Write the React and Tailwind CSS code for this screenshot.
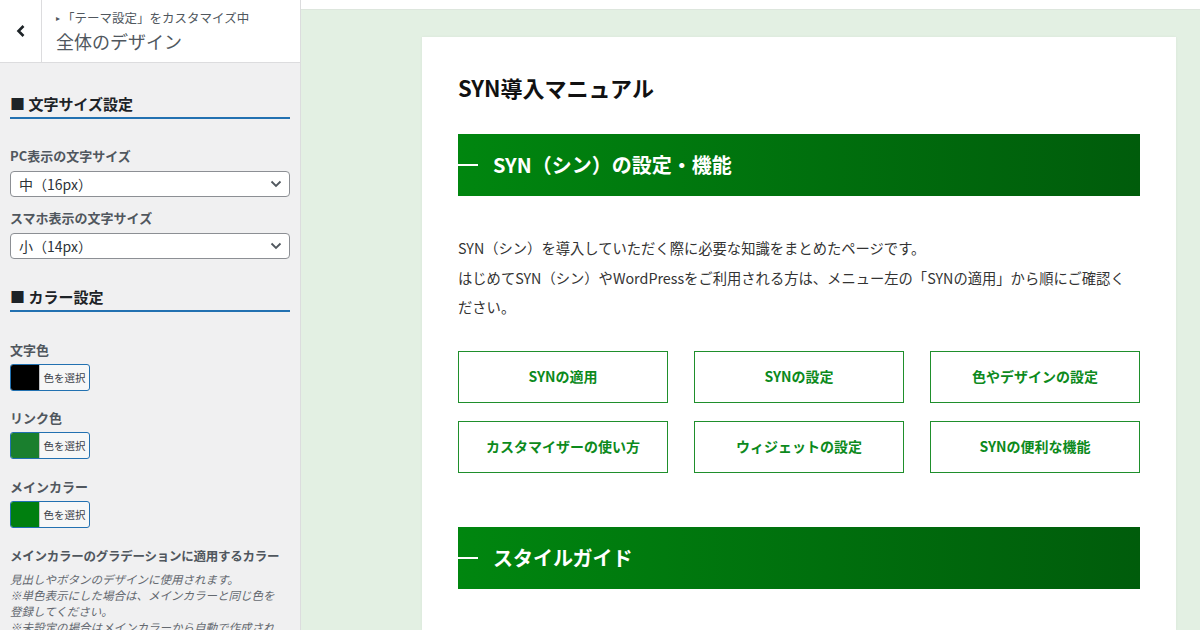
import React from 'react';

const jp = { fontFamily: '"Noto Sans CJK JP", "Noto Sans", sans-serif' };

const Chevron = () => (
    <svg width="12" height="8" viewBox="0 0 12 8" className="shrink-0">
        <path d="M1.5 1.5L6 6l4.5-4.5" fill="none" stroke="#50575e" strokeWidth="1.8" />
    </svg>
);

const SelectBox = ({ value }) => (
    <div className="h-[26px] bg-white border border-[#8c8f94] rounded-[4px] flex items-center justify-between pl-[8px] pr-[7px] text-[14px] text-[#2c3338]">
        <span>{value}</span>
        <Chevron />
    </div>
);

const ColorButton = ({ color }) => (
    <div className="w-[80px] h-[27px] flex border border-[#2271b1] rounded-[3px] overflow-hidden bg-[#f6f7f7]">
        <div className="w-[28px] h-full" style={{ backgroundColor: color }} />
        <div className="flex-1 flex items-center justify-center text-[10.5px] text-[#3c434a] border-l border-[#c3c4c7]">色を選択</div>
    </div>
);

const SectionTitle = ({ children }) => (
    <div className="border-b-2 border-[#2271b1] pb-[2px] text-[15px] leading-[22px] font-bold text-[#1d2327]">
        ■ {children}
    </div>
);

const Label = ({ children, className = '' }) => (
    <div className={`text-[13px] leading-[18px] font-semibold text-[#50575e] ${className}`}>{children}</div>
);

const Banner = ({ children, className = '' }) => (
    <div className={`h-[62px] flex items-center bg-gradient-to-r from-[#00860f] to-[#005c0b] ${className}`}>
        <div className="w-[20px] h-[2px] bg-white" />
        <h2 className="ml-[15px] text-[20px] font-bold text-white">{children}</h2>
    </div>
);

const links = ['SYNの適用', 'SYNの設定', '色やデザインの設定', 'カスタマイザーの使い方', 'ウィジェットの設定', 'SYNの便利な機能'];

export default function App() {
    return (
        <div className="w-[1200px] h-[630px] flex overflow-hidden bg-white" style={jp}>
            <aside className="w-[301px] shrink-0 flex flex-col bg-[#f0f0f1] border-r border-[#dcdcde]">
                <header className="h-[63px] shrink-0 flex bg-white border-b border-[#dcdcde]">
                    <div className="w-[42px] border-r border-[#dcdcde] flex items-center justify-center">
                        <svg width="10" height="14" viewBox="0 0 10 14">
                            <path d="M7.5 2L2.5 7l5 5" fill="none" stroke="#1d2327" strokeWidth="2.6" />
                        </svg>
                    </div>
                    <div className="pl-[14px] pt-[9px]">
                        <div className="text-[12.5px] leading-[18px] text-[#50575e] flex items-center">
                            <span className="text-[8px] mr-[2px]">▸</span>「テーマ設定」をカスタマイズ中
                        </div>
                        <div className="mt-[1px] text-[18px] leading-[26px] text-[#50575e]">全体のデザイン</div>
                    </div>
                </header>
                <div className="px-[10px] pt-[30px]">
                    <SectionTitle>文字サイズ設定</SectionTitle>
                    <Label className="mt-[28px]">PC表示の文字サイズ</Label>
                    <div className="mt-[6px]"><SelectBox value="中（16px）" /></div>
                    <Label className="mt-[12px]">スマホ表示の文字サイズ</Label>
                    <div className="mt-[6px]"><SelectBox value="小（14px）" /></div>
                    <div className="mt-[27px]"><SectionTitle>カラー設定</SectionTitle></div>
                    <Label className="mt-[29px]">文字色</Label>
                    <div className="mt-[5px]"><ColorButton color="#000000" /></div>
                    <Label className="mt-[18px]">リンク色</Label>
                    <div className="mt-[5px]"><ColorButton color="#1a7f2e" /></div>
                    <Label className="mt-[19px]">メインカラー</Label>
                    <div className="mt-[5px]"><ColorButton color="#007f0f" /></div>
                    <div className="mt-[19px] text-[12.5px] leading-[18px] font-bold text-[#50575e] whitespace-nowrap tracking-[-0.02em]">
                        メインカラーのグラデーションに適用するカラー
                    </div>
                    <p className="mt-[6px] text-[11.5px] leading-[16px] italic text-[#646970] whitespace-nowrap">
                        見出しやボタンのデザインに使用されます。<br />
                        ※単色表示にした場合は、メインカラーと同じ色を<br />
                        登録してください。<br />
                        ※未設定の場合はメインカラーから自動で作成され
                    </p>
                </div>
            </aside>

            <main className="flex-1 flex flex-col">
                <div className="h-[10px] shrink-0 bg-white border-b border-[#dde6dd]" />
                <div className="flex-1 flex bg-[#e3f0e3] pl-[121px] pr-[24px] pt-[27px]">
                    <article className="flex-1 bg-white px-[36px] pt-[35px] shadow-[0_0_3px_rgba(0,0,0,0.05)]">
                        <h1 className="text-[22px] leading-[30px] font-bold text-[#111]">SYN導入マニュアル</h1>
                        <Banner className="mt-[32px]">SYN（シン）の設定・機能</Banner>
                        <p className="mt-[37px] text-[14.3px] leading-[29.5px] text-[#333] whitespace-nowrap">
                            SYN（シン）を導入していただく際に必要な知識をまとめたページです。<br />
                            はじめてSYN（シン）やWordPressをご利用される方は、メニュー左の「SYNの適用」から順にご確認く<br />
                            ださい。
                        </p>
                        <div className="mt-[29px] grid grid-cols-3 gap-x-[26px] gap-y-[18px]">
                            {links.map((l) => (
                                <div key={l} className="h-[52px] border border-[#1f8f2c] flex items-center justify-center text-[14px] font-bold text-[#0c8a1c]">
                                    {l}
                                </div>
                            ))}
                        </div>
                        <Banner className="mt-[54px]">スタイルガイド</Banner>
                    </article>
                </div>
            </main>
        </div>
    );
}
